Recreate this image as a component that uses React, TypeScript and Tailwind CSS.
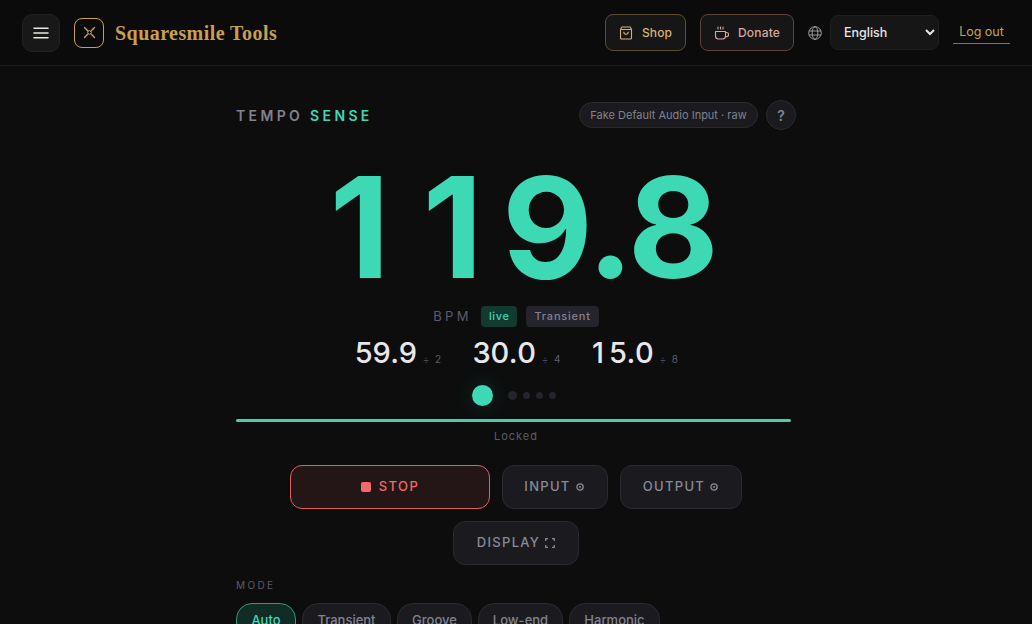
import React from "react";

const Gear = () => (
  <svg width="8" height="8" viewBox="0 0 8 8" fill="none" stroke="currentColor" strokeWidth="1.3" className="shrink-0">
    <circle cx="4" cy="4" r="3.1" />
    <circle cx="4" cy="4" r="1" fill="currentColor" stroke="none" />
  </svg>
);

export default function App() {
  return (
    <div className="h-[624px] overflow-hidden bg-[#0d0d0e] font-['Inter',sans-serif]">
      <header className="h-[66px] border-b border-[#1c1c1e] flex items-center pl-[22px] pr-[22px] bg-[#0b0b0c]">
        <button className="w-[38px] h-[38px] rounded-[10px] bg-[#181819] border border-[#222224] flex items-center justify-center">
          <svg width="16" height="12" viewBox="0 0 16 12" fill="none" stroke="#e8e6e0" strokeWidth="1.6" strokeLinecap="round">
            <path d="M1 1.2h14M1 6h14M1 10.8h14" />
          </svg>
        </button>
        <div className="ml-[14px] w-[30px] h-[30px] rounded-[8px] border border-[#c9a050] flex items-center justify-center">
          <svg width="13" height="13" viewBox="0 0 13 13" fill="none" stroke="#c9a050" strokeWidth="1.4" strokeLinecap="round">
            <path d="M1.5 1.5l3.4 3.4M11.5 1.5L8.1 4.9M1.5 11.5l3.4-3.4M11.5 11.5L8.1 8.1" />
            <path d="M6.5 4.6l1.9 1.9-1.9 1.9-1.9-1.9z" strokeWidth="1" />
          </svg>
        </div>
        <span className="ml-[11px] text-[20px] font-bold text-[#c9a050] font-['Liberation_Serif',serif] tracking-[0.44px]">Squaresmile Tools</span>
        <div className="ml-auto flex items-center">
          <button className="h-[37px] w-[81px] rounded-[8px] border border-[#5c4c30] bg-[#161616] flex items-center justify-center gap-[9px] text-[12px] font-medium tracking-[0.1px] text-[#d9b36c]">
            <svg width="14" height="14" viewBox="0 0 14 14" fill="none" stroke="#d9b36c" strokeWidth="1.1" strokeLinecap="round" strokeLinejoin="round">
              <path d="M1.5 3.5L2.8 1h8.4l1.3 2.5V12a1 1 0 0 1-1 1h-9a1 1 0 0 1-1-1z M1.5 3.5h11 M4.8 6a2.2 2.2 0 0 0 4.4 0" />
            </svg>
            Shop
          </button>
          <button className="ml-[14px] h-[37px] w-[94px] rounded-[8px] border border-[#5c443a] bg-[#161616] flex items-center justify-center gap-[9px] text-[12px] font-medium tracking-[0.2px] text-[#d9a8a0]">
            <svg width="15" height="14" viewBox="0 0 15 14" fill="none" stroke="#d9a8a0" strokeWidth="1.1" strokeLinecap="round" strokeLinejoin="round">
              <path d="M1.5 5.5h10V10a3 3 0 0 1-3 3h-4a3 3 0 0 1-3-3z M11.5 6.5h1a1.6 1.6 0 0 1 0 4.2h-1 M4 1v2 M6.5 1v2 M9 1v2" />
            </svg>
            Donate
          </button>
          <svg className="ml-[14px]" width="14" height="14" viewBox="0 0 14 14" fill="none" stroke="#a8a8a8" strokeWidth="0.9">
            <circle cx="7" cy="7" r="6.3" />
            <ellipse cx="7" cy="7" rx="2.8" ry="6.3" />
            <path d="M1 5h12M1 9h12" />
          </svg>
          <select className="ml-[8px] h-[35px] w-[109px] rounded-[8px] border border-[#1f1f21] bg-[#161616] pl-[9px] text-[12.5px] font-medium text-[#e8e6e0] outline-none">
            <option>English</option>
          </select>
          <a className="ml-[14px] w-[57px] h-[22px] border-b border-[#8f7238] flex items-center justify-center text-[12.5px] text-[#c9a050]">Log out</a>
        </div>
      </header>

      <main className="w-[560px] mx-auto">
        <div className="h-[30px] mt-[34px] flex items-center justify-between">
          <h1 className="text-[14px] font-semibold tracking-[3.36px] text-[#82828f]">
            TEMPO <span className="text-[#3dd9b4]">SENSE</span>
          </h1>
          <div className="flex items-center gap-[8px]">
            <span className="h-[26px] w-[179px] rounded-full bg-[#1a1a1f] border border-[#2a2a30] flex items-center justify-center text-[11px] text-[#82828f]">
              Fake Default Audio Input · raw
            </span>
            <button className="w-[30px] h-[30px] rounded-full bg-[#1a1a1f] border border-[#2a2a30] flex items-center justify-center text-[14px] font-semibold text-[#82828f]">?</button>
          </div>
        </div>

        <div className="mt-[24px] h-[145px] flex items-center justify-center text-[140px] font-bold leading-none text-[#3dd9b4]">
          <span className="w-[93px] text-center">1</span>
          <span className="w-[93px] text-center">1</span>
          <span className="ml-[3px]">9</span>
          <span className="ml-[-6px] mr-[-6px]">.</span>
          <span>8</span>
        </div>

        <div className="mt-[7px] h-[20px] flex items-center justify-center gap-[9px]">
          <span className="text-[13px] tracking-[3.4px] text-[#5c5c68] pt-[1px]">BPM</span>
          <span className="h-[21px] px-[8px] rounded-[4px] bg-[#123b30] flex items-center text-[11px] font-medium tracking-[0.6px] text-[#3dd9b4]">live</span>
          <span className="h-[21px] px-[8px] rounded-[4px] bg-[#24242c] flex items-center text-[11px] font-medium tracking-[0.8px] text-[#82828f]">Transient</span>
        </div>

        <div className="mt-[10px] h-[32px] pl-[2px] flex items-center justify-center gap-[30px]">
          {[["59.9", "÷ 2"], ["30.0", "÷ 4"], ["15.0", "÷ 8"]].map(([v, d]) => (
            <div key={v} className="flex items-baseline gap-[6px]">
              <span className="flex text-[29px] font-medium leading-none tracking-[-0.3px] text-[#e8e8ec]">
                {v.split("").map((c, i) =>
                  c === "1" ? (
                    <span key={i} className="w-[17px] text-left">1</span>
                  ) : (
                    <span key={i}>{c}</span>
                  )
                )}
              </span>
              <span className="text-[10px] tracking-[1.4px] text-[#5c5c68]">{d}</span>
            </div>
          ))}
        </div>

        <div className="mt-[16px] h-[22px] pr-[4px] flex items-center justify-center">
          <span className="w-[21px] h-[21px] rounded-full bg-[#3dd9b4] mr-[15px] shadow-[0_0_24px_rgba(61,214,172,0.18)]" />
          <span className="w-[9px] h-[9px] rounded-full bg-[#24242c] mr-[6px]" />
          <span className="w-[7px] h-[7px] rounded-full bg-[#24242c] mr-[6px]" />
          <span className="w-[7px] h-[7px] rounded-full bg-[#24242c] mr-[6px]" />
          <span className="w-[7px] h-[7px] rounded-full bg-[#24242c]" />
        </div>

        <div className="mt-[13px] w-[555px] h-[3px] rounded-full bg-[#4bcba8]" />
        <div className="mt-[6px] w-[560px] text-center text-[11px] tracking-[1px] leading-[16px] text-[#5c5c68]">Locked</div>

        <div className="mt-[21px] flex justify-center gap-[12px]">
          <button className="w-[200px] h-[44px] rounded-[12px] border border-[#e0605c] bg-[#241617] flex items-center justify-center gap-[8px] text-[13px] font-medium tracking-[1.4px] text-[#ee6a66]">
            <span className="w-[10px] h-[10px] rounded-[2px] bg-[#f46a6a]" />
            STOP
          </button>
          <button className="w-[106px] h-[44px] pr-[2px] rounded-[12px] border border-[#2a2a30] bg-[#1a1a1f] flex items-center justify-center gap-[5px] text-[13px] font-medium tracking-[1.3px] text-[#8a8a98]">
            INPUT <Gear />
          </button>
          <button className="w-[122px] h-[44px] pr-[1px] rounded-[12px] border border-[#2a2a30] bg-[#1a1a1f] flex items-center justify-center gap-[5px] text-[13px] font-medium tracking-[1.3px] text-[#8a8a98]">
            OUTPUT <Gear />
          </button>
        </div>
        <div className="mt-[12px] flex justify-center">
          <button className="w-[126px] h-[44px] rounded-[12px] border border-[#2a2a30] bg-[#1a1a1f] flex items-center justify-center gap-[5px] text-[13px] font-medium tracking-[1.3px] text-[#8a8a98]">
            DISPLAY
            <svg width="10" height="10" viewBox="0 0 10 10" fill="none" stroke="currentColor" strokeWidth="1.3" strokeLinejoin="round">
              <path d="M.7 3V.7H3M7 .7h2.3V3M9.3 7v2.3H7M3 9.3H.7V7" />
            </svg>
          </button>
        </div>

        <div className="mt-[13px] text-[10px] tracking-[2.4px] leading-[14px] text-[#5c5c68]">MODE</div>
        <div className="mt-[11px] flex gap-[6px]">
          <button className="w-[60px] h-[40px] rounded-[16px] border border-[#2f9a7c] bg-[#102c25] pb-[4px] text-[13px] font-medium text-[#3dd9b4]">Auto</button>
          {[["Transient", "w-[89px]"], ["Groove", "w-[75px]"], ["Low-end", "w-[85px]"], ["Harmonic", "w-[91px]"]].map(([t, w]) => (
            <button key={t} className={`${w} h-[40px] rounded-[16px] border border-[#2a2a30] bg-[#1a1a1f] pb-[4px] text-[13px] font-medium text-[#82828f]`}>{t}</button>
          ))}
        </div>
      </main>
    </div>
  );
}
